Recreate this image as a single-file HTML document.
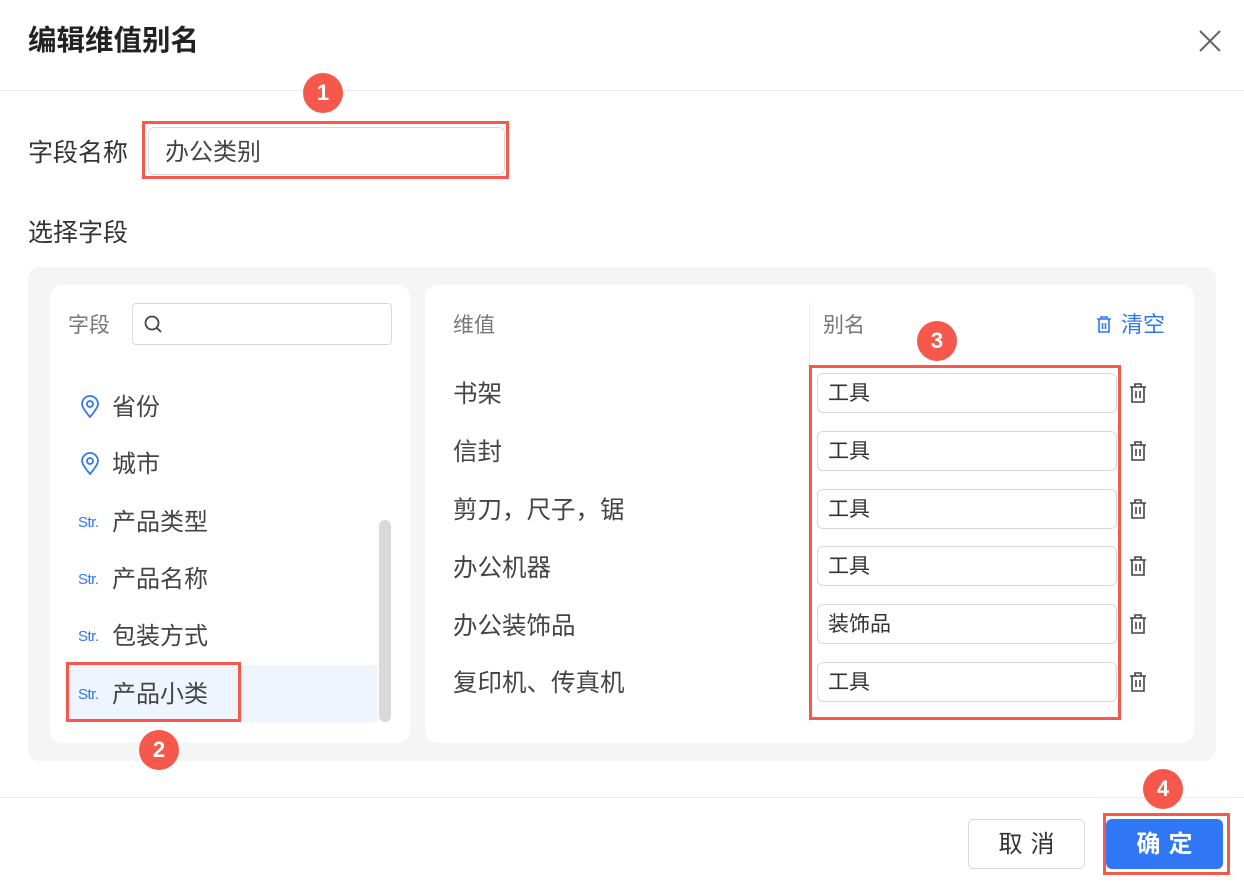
<!DOCTYPE html>
<html><head><meta charset="utf-8"><style>
*{box-sizing:border-box;margin:0;padding:0}
body{width:1244px;height:884px;background:#fff;position:relative;overflow:hidden;font-family:"Liberation Sans","Noto Sans CJK SC",sans-serif;color:#333}
.a{position:absolute}
.badge{position:absolute;width:40px;height:40px;border-radius:50%;background:#f6594b;color:#fff;font-size:22px;font-weight:bold;text-align:center;line-height:40px}
.red{position:absolute;border:3px solid #f6594b}
.item{position:absolute;left:78px;font-size:24px;color:#444;line-height:30px}
.str{display:inline-block;width:34px;font-size:15px;color:#2f77f5;letter-spacing:-0.5px;vertical-align:3px}
.row{position:absolute;left:453px;font-size:24.5px;color:#444;line-height:30px}
.inp{position:absolute;left:817px;width:300px;height:40px;border:1px solid #d8d8d8;border-radius:6px;background:#fff;font-size:21px;line-height:40px;padding-left:10px;color:#333}
.tr{position:absolute;left:1128px}
</style></head><body>
<div class="a" style="left:28px;top:22px;font-size:28.5px;font-weight:bold;color:#222;line-height:38px">编辑维值别名</div>
<svg class="a" style="left:1198px;top:29px" width="24" height="24"><path d="M2 2L22 22M22 2L2 22" stroke="#666" stroke-width="2"/></svg>
<div class="a" style="left:0;top:90px;width:1244px;height:1px;background:#ececec"></div>
<div class="a" style="left:28px;top:138px;font-size:25px;line-height:30px;color:#333">字段名称</div>
<div class="a" style="left:148px;top:127px;width:357px;height:48px;border:1px solid #d8d8d8;border-radius:6px;font-size:24px;line-height:50px;padding-left:16px;color:#444">办公类别</div>
<div class="red" style="left:142px;top:121px;width:367px;height:58px"></div>
<div class="badge" style="left:303px;top:73px">1</div>
<div class="a" style="left:28px;top:218px;font-size:25px;line-height:30px;color:#333">选择字段</div>
<div class="a" style="left:28px;top:267px;width:1188px;height:494px;background:#f5f5f5;border-radius:12px"></div>
<div class="a" style="left:50px;top:285px;width:360px;height:458px;background:#fff;border-radius:12px"></div>
<div class="a" style="left:425px;top:285px;width:769px;height:458px;background:#fff;border-radius:12px"></div>
<div class="a" style="left:68px;top:312px;font-size:21px;color:#777;line-height:28px">字段</div>
<div class="a" style="left:132px;top:303px;width:260px;height:42px;border:1px solid #d8d8d8;border-radius:4px"></div>
<svg class="a" style="left:143px;top:314px" width="20" height="20"><circle cx="9" cy="9" r="6.5" fill="none" stroke="#444" stroke-width="1.8"/><path d="M14 14L18 18" stroke="#444" stroke-width="1.8"/></svg>
<div class="a" style="left:65px;top:665px;width:313px;height:57px;background:#eef5fe"></div>
<div class="a" style="left:379px;top:520px;width:12px;height:202px;background:#d9d9d9;border-radius:6px"></div>
<svg class="a" style="left:80px;top:395px" width="20" height="24"><path d="M10 22C10 22 2 13 2 9a8 8 0 0 1 16 0c0 4-8 13-8 13z" fill="none" stroke="#2f77f5" stroke-width="1.8"/><circle cx="10" cy="9" r="3" fill="none" stroke="#2f77f5" stroke-width="1.8"/></svg>
<div class="item" style="left:112px;top:393px">省份</div>
<svg class="a" style="left:80px;top:452px" width="20" height="24"><path d="M10 22C10 22 2 13 2 9a8 8 0 0 1 16 0c0 4-8 13-8 13z" fill="none" stroke="#2f77f5" stroke-width="1.8"/><circle cx="10" cy="9" r="3" fill="none" stroke="#2f77f5" stroke-width="1.8"/></svg>
<div class="item" style="left:112px;top:450px">城市</div>
<div class="item" style="top:508px"><span class="str">Str.</span>产品类型</div>
<div class="item" style="top:565px"><span class="str">Str.</span>产品名称</div>
<div class="item" style="top:622px"><span class="str">Str.</span>包装方式</div>
<div class="item" style="top:680px"><span class="str">Str.</span>产品小类</div>
<div class="red" style="left:66px;top:662px;width:175px;height:60px"></div>
<div class="badge" style="left:139px;top:730px">2</div>
<div class="a" style="left:453px;top:312px;font-size:21px;color:#777;line-height:28px">维值</div>
<div class="a" style="left:809px;top:303px;width:1px;height:420px;background:#ececec"></div>
<div class="a" style="left:823px;top:312px;font-size:21px;color:#777;line-height:28px">别名</div>
<svg class="a" style="left:1095px;top:315px" width="18" height="20"><path d="M2 4H16M6 4V2H12V4M4 4V17H14V4M7.5 8V14M10.5 8V14" fill="none" stroke="#2f77f5" stroke-width="1.6"/></svg>
<div class="a" style="left:1121px;top:311px;font-size:22px;color:#2f77f5;line-height:28px">清空</div>
<div class="row" style="top:380px">书架</div>
<div class="row" style="top:438px">信封</div>
<div class="row" style="top:496px">剪刀，尺子，锯</div>
<div class="row" style="top:554px">办公机器</div>
<div class="row" style="top:612px">办公装饰品</div>
<div class="row" style="top:669px">复印机、传真机</div>
<div class="inp" style="top:373px">工具</div>
<div class="inp" style="top:431px">工具</div>
<div class="inp" style="top:489px">工具</div>
<div class="inp" style="top:546px">工具</div>
<div class="inp" style="top:604px">装饰品</div>
<div class="inp" style="top:662px">工具</div>
<svg class="tr" style="top:382px" width="20" height="22"><path d="M2 5H18M7 5V2H13V5M4 5V20H16V5M8 9V16M12 9V16" fill="none" stroke="#444" stroke-width="1.6"/></svg>
<svg class="tr" style="top:440px" width="20" height="22"><path d="M2 5H18M7 5V2H13V5M4 5V20H16V5M8 9V16M12 9V16" fill="none" stroke="#444" stroke-width="1.6"/></svg>
<svg class="tr" style="top:498px" width="20" height="22"><path d="M2 5H18M7 5V2H13V5M4 5V20H16V5M8 9V16M12 9V16" fill="none" stroke="#444" stroke-width="1.6"/></svg>
<svg class="tr" style="top:555px" width="20" height="22"><path d="M2 5H18M7 5V2H13V5M4 5V20H16V5M8 9V16M12 9V16" fill="none" stroke="#444" stroke-width="1.6"/></svg>
<svg class="tr" style="top:613px" width="20" height="22"><path d="M2 5H18M7 5V2H13V5M4 5V20H16V5M8 9V16M12 9V16" fill="none" stroke="#444" stroke-width="1.6"/></svg>
<svg class="tr" style="top:671px" width="20" height="22"><path d="M2 5H18M7 5V2H13V5M4 5V20H16V5M8 9V16M12 9V16" fill="none" stroke="#444" stroke-width="1.6"/></svg>
<div class="red" style="left:809px;top:365px;width:312px;height:355px"></div>
<div class="badge" style="left:917px;top:321px">3</div>
<div class="a" style="left:0;top:797px;width:1244px;height:1px;background:#ececec"></div>
<div class="a" style="left:968px;top:819px;width:117px;height:50px;border:1px solid #d8d8d8;border-radius:6px;text-align:center;line-height:50px;font-size:24px;color:#333;letter-spacing:8px;padding-left:8px">取消</div>
<div class="a" style="left:1106px;top:819px;width:117px;height:50px;background:#2f77f5;border-radius:6px;text-align:center;line-height:52px;font-size:24px;color:#fff;font-weight:bold;letter-spacing:8px;padding-left:8px">确定</div>
<div class="red" style="left:1103px;top:813px;width:127px;height:62px"></div>
<div class="badge" style="left:1143px;top:769px">4</div>
</body></html>
